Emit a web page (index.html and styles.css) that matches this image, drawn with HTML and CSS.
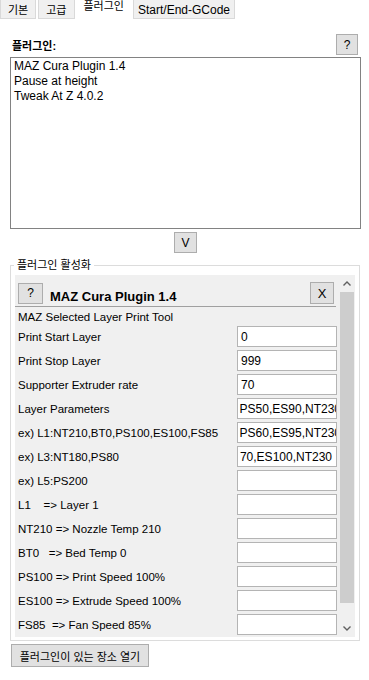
FILE: index.html
```html
<!DOCTYPE html>
<html lang="ko">
<head>
  <meta charset="UTF-8" />
  <meta name="viewport" content="width=device-width, initial-scale=1.0" />
  <title>플러그인</title>
  <link rel="stylesheet" href="styles.css">
</head>
<body>

  <div class="tabs">
    <div class="tab">기본</div>
    <div class="tab">고급</div>
    <div class="tab active">플러그인</div>
    <div class="tab">Start/End-GCode</div>
  </div>

  <div class="page">
    <div class="head">
      <span class="title">플러그인:</span>
      <button class="btn help">?</button>
    </div>

    <div class="list">
      <div>MAZ Cura Plugin 1.4</div>
      <div>Pause at height</div>
      <div>Tweak At Z 4.0.2</div>
    </div>

    <div class="center">
      <button class="btn move">V</button>
    </div>

    <fieldset class="group">
      <legend>플러그인 활성화</legend>
      <div class="scrollbox">
        <div class="panel">
          <div class="panel-head">
            <button class="btn q">?</button>
            <span class="plugin-name">MAZ Cura Plugin 1.4</span>
            <button class="btn close">X</button>
          </div>
          <div class="desc">MAZ Selected Layer Print Tool</div>

          <div class="rows">
            <div class="row"><span>Print Start Layer</span><div class="field">0</div></div>
            <div class="row"><span>Print Stop Layer</span><div class="field">999</div></div>
            <div class="row"><span>Supporter Extruder rate</span><div class="field">70</div></div>
            <div class="row"><span>Layer Parameters</span><div class="field end cut"><span>PS50,ES90,NT230</span></div></div>
            <div class="row"><span>ex) L1:NT210,BT0,PS100,ES100,FS85</span><div class="field end cut"><span>PS60,ES95,NT230</span></div></div>
            <div class="row"><span>ex) L3:NT180,PS80</span><div class="field end"><span>70,ES100,NT230</span></div></div>
            <div class="row"><span>ex) L5:PS200</span><div class="field"></div></div>
            <div class="row"><span>L1 &nbsp;&nbsp;&nbsp;=&gt; Layer 1</span><div class="field"></div></div>
            <div class="row"><span>NT210 =&gt; Nozzle Temp 210</span><div class="field"></div></div>
            <div class="row"><span>BT0 &nbsp;&nbsp;=&gt; Bed Temp 0</span><div class="field"></div></div>
            <div class="row"><span>PS100 =&gt; Print Speed 100%</span><div class="field"></div></div>
            <div class="row"><span>ES100 =&gt; Extrude Speed 100%</span><div class="field"></div></div>
            <div class="row"><span>FS85 &nbsp;=&gt; Fan Speed 85%</span><div class="field"></div></div>
          </div>
        </div>

        <div class="scrollbar">
          <div class="arrow">
            <svg width="8" height="5" viewBox="0 0 8 5"><polyline points="0.5,4.5 4,1 7.5,4.5" fill="none" stroke="#606060" stroke-width="1.4"/></svg>
          </div>
          <div class="track"><div class="thumb"></div></div>
          <div class="arrow">
            <svg width="8" height="5" viewBox="0 0 8 5"><polyline points="0.5,0.5 4,4 7.5,0.5" fill="none" stroke="#606060" stroke-width="1.4"/></svg>
          </div>
        </div>
      </div>
    </fieldset>

    <button class="btn open">플러그인이 있는 장소 열기</button>
  </div>

</body>
</html>
```

FILE: styles.css
```css
body {
  margin: 0;
  background: #fff;
  color: #000;
  font-family: "Liberation Sans", "Noto Sans CJK KR", sans-serif;
  font-size: 12px;
}

/* tabs */
.tabs {
  display: flex;
  height: 19px;
}

.tab {
  box-sizing: border-box;
  height: 19px;
  padding: 0 7px;
  margin-right: 2px;
  border: 1px solid #d9d9d9;
  border-top: none;
  background: #f0f0f0;
  line-height: 20px;
  font-size: 11px;
}

.tab.active {
  background: #fff;
  border-color: #fff;
  padding: 0 6px;
  line-height: 13px;
}

.tab:last-child {
  font-size: 12px;
  padding: 0 4px;
}

/* buttons */
.btn {
  box-sizing: border-box;
  padding: 0;
  background: #e1e1e1;
  border: 1px solid #adadad;
  border-radius: 0;
  font-family: inherit;
  font-size: 12px;
  color: #000;
}

.page {
  padding: 0 8px 0 10px;
}

.head {
  display: flex;
  align-items: center;
  justify-content: space-between;
  margin-top: 15px;
  height: 21px;
}

.title {
  margin-left: 2px;
  font-weight: bold;
  font-size: 11px;
}

.help {
  width: 22px;
  height: 21px;
  margin-right: 3px;
}

.list {
  box-sizing: border-box;
  height: 172px;
  margin-top: 2px;
  padding: 1px 3px;
  border: 1px solid #828282;
  line-height: 15px;
}

.center {
  display: flex;
  justify-content: center;
  margin-top: 3px;
}

.move {
  width: 23px;
  height: 21px;
}

/* group box */
.group {
  margin: 6px 0 0 0;
  padding: 4px 4px 3px 4px;
  border: 1px solid #dcdcdc;
  width: 350px;
  box-sizing: border-box;
}

.group legend {
  padding: 0 3px;
  margin-left: -1px;
  font-size: 11px;
  line-height: 12px;
}

.scrollbox {
  display: flex;
  height: 362px;
}

.panel {
  width: 324px;
  background: #f0f0f0;
  overflow: hidden;
  font-size: 11.5px;
}

.panel-head {
  display: flex;
  align-items: center;
  height: 22px;
  margin: 7px 3px 0 0;
  padding: 0 2px 2px 3px;
  border-bottom: 1px solid #a0a0a0;
}

.q {
  width: 25px;
  height: 21px;
}

.plugin-name {
  margin-left: 7px;
  margin-top: 6px;
  font-weight: bold;
  font-size: 13px;
}

.close {
  margin-left: auto;
  width: 24px;
  height: 22px;
  font-size: 13px;
}

.desc {
  height: 19px;
  line-height: 21px;
  padding-left: 3px;
}

.rows {
  display: flex;
  flex-direction: column;
  gap: 3px;
}

.row {
  display: flex;
  align-items: center;
  justify-content: space-between;
  height: 21px;
  padding: 0 2px 0 3px;
  white-space: nowrap;
}

.field {
  box-sizing: border-box;
  display: flex;
  align-items: center;
  width: 100px;
  height: 21px;
  padding: 0 3px;
  background: #fff;
  border: 1px solid #b4b4b4;
  overflow: hidden;
  white-space: nowrap;
  font-size: 12px;
}

.field.end {
  justify-content: flex-end;
  padding-right: 4px;
}

.field.cut span {
  margin-right: -9px;
}

/* scrollbar */
.scrollbar {
  display: flex;
  flex-direction: column;
  width: 16px;
  background: #f0f0f0;
}

.arrow {
  display: flex;
  align-items: center;
  justify-content: center;
  height: 17px;
}

.track {
  flex: 1;
  padding: 0 1px 0 1px;
}

.thumb {
  height: 311px;
  background: #cdcdcd;
}

.open {
  width: 138px;
  height: 23px;
  margin: 3px 0 0 1px;
  font-size: 11px;
}
```
